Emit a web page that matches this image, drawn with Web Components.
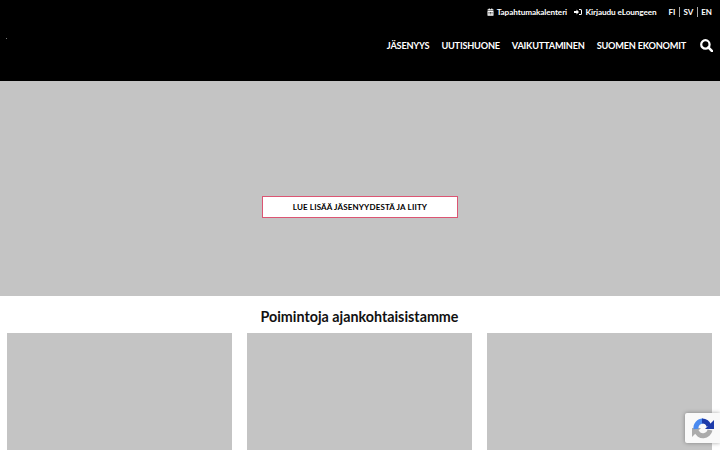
<!DOCTYPE html>
<html lang="fi">
<head>
<meta charset="utf-8">
<title>Ekonomit</title>
<style>
  html, body { margin: 0; height: 450px; overflow: hidden; background: #fff; }
  body { font-family: "Lato", "Liberation Sans", sans-serif; }
</style>
</head>
<body>
<site-header></site-header>
<hero-banner label="LUE LISÄÄ JÄSENYYDESTÄ JA LIITY"></hero-banner>
<news-section heading="Poimintoja ajankohtaisistamme">
  <news-card></news-card>
  <news-card></news-card>
  <news-card></news-card>
</news-section>
<recaptcha-badge></recaptcha-badge>

<script>
class SiteHeader extends HTMLElement {
    constructor() {
        super();
        this.attachShadow({ mode: 'open' });
    }

    connectedCallback() {
        this.shadowRoot.innerHTML = /*html*/`
        <style>
            :host { display: block; height: 81px; background: #000; color: #fff; position: relative; }
            .top { display: flex; justify-content: flex-end; align-items: center; height: 24px; padding-right: 8px; font-size: 8.2px; font-weight: 700; letter-spacing: -.1px; }
            .top a { display: flex; align-items: center; gap: 3px; margin-right: 7px; }
            .top svg { width: 7px; height: 8px; fill: #fff; }
            .top a.login { gap: 3.5px; }
            .top a.login svg { width: 8px; }
            .lang { display: flex; align-items: center; margin-left: 5px; font-size: 8px; letter-spacing: 0; }
            .lang span { padding: 0 3.5px; height: 10px; line-height: 10px; border-left: 1px solid #aaa; }
            .lang span:first-child { border-left: 0; padding-left: 0; }
            .lang span:last-child { padding-right: 0; }
            nav { display: flex; justify-content: flex-end; align-items: center; height: 42px; padding-right: 7px; font-size: 9.2px; font-weight: 700; letter-spacing: -.22px; }
            nav a { margin-right: 12px; }
            nav svg { width: 13px; height: 13px; fill: none; stroke: #fff; margin-left: 2px; }
            .dot { position: absolute; left: 6px; top: 38px; width: 1px; height: 1px; background: #777; }
        </style>
        <div class="dot"></div>
        <div class="top">
            <a><svg viewBox="0 0 14 16"><path fill-rule="evenodd" d="M1 6h12v8.500a1 1 0 0 1-1 1H2a1 1 0 0 1-1-1zM3 8v1.500h2V8zm3 0v1.500h2V8zm3 0v1.500h2V8zm-6 3v1.500h2V11zm3 0v1.500h2V11zm3 0v1.500h2V11zM2 2.500h1.500V1h2v1.500h3V1h2v1.500H12a1 1 0 0 1 1 1V5H1V3.500a1 1 0 0 1 1-1z"/></svg>Tapahtumakalenteri</a>
            <a class="login"><svg viewBox="0 0 16 14"><path d="M0 5h5V2l5 5-5 5V9H0zM10 1h3a3 3 0 0 1 3 3v6a3 3 0 0 1-3 3h-3v-2h3a1 1 0 0 0 1-1V4a1 1 0 0 0-1-1h-3z"/></svg>Kirjaudu eLoungeen</a>
            <div class="lang"><span>FI</span><span>SV</span><span>EN</span></div>
        </div>
        <nav>
            <a>JÄSENYYS</a>
            <a>UUTISHUONE</a>
            <a>VAIKUTTAMINEN</a>
            <a>SUOMEN EKONOMIT</a>
            <svg viewBox="0 0 14 14"><circle cx="5.800" cy="5.800" r="4.500" stroke-width="2.400"/><path d="M9 9l4 4" stroke-width="2.800" stroke-linecap="round"/></svg>
        </nav>
        `;
    }
}
customElements.define('site-header', SiteHeader);

class HeroBanner extends HTMLElement {
    constructor() {
        super();
        this.attachShadow({ mode: 'open' });
    }

    connectedCallback() {
        const label = this.getAttribute('label');
        this.shadowRoot.innerHTML = /*html*/`
        <style>
            :host { display: flex; justify-content: center; align-items: flex-start; height: 215px; background: #c4c4c4; }
            a { display: flex; justify-content: center; align-items: center; box-sizing: border-box; width: 196px; height: 22px; margin-top: 115px; background: #fff; border: 1px solid #dc5573; color: #000; font-size: 8px; font-weight: 700; letter-spacing: .14px; }
        </style>
        <a>${label}</a>
        `;
    }
}
customElements.define('hero-banner', HeroBanner);

class NewsSection extends HTMLElement {
    constructor() {
        super();
        this.attachShadow({ mode: 'open' });
    }

    connectedCallback() {
        const heading = this.getAttribute('heading');
        this.shadowRoot.innerHTML = /*html*/`
        <style>
            :host { display: block; background: #fff; padding: 0 8px 0 7px; }
            h2 { margin: 0; height: 37px; line-height: 42px; text-align: center; font-size: 14.3px; font-weight: 700; color: #111; }
            .cards { display: grid; grid-template-columns: repeat(3, 225px); gap: 15px; }
        </style>
        <h2>${heading}</h2>
        <div class="cards"><slot></slot></div>
        `;
    }
}
customElements.define('news-section', NewsSection);

class NewsCard extends HTMLElement {
    constructor() {
        super();
        this.attachShadow({ mode: 'open' });
        this.shadowRoot.innerHTML = /*html*/`
        <style>
            :host { display: block; height: 117px; background: #c4c4c4; }
        </style>
        `;
    }
}
customElements.define('news-card', NewsCard);

class RecaptchaBadge extends HTMLElement {
    constructor() {
        super();
        this.attachShadow({ mode: 'open' });
        this.shadowRoot.innerHTML = /*html*/`
        <style>
            :host { position: absolute; left: 685px; top: 413px; width: 35px; height: 30px; background: #f9f9f9; box-shadow: 0 0 4px rgba(0,0,0,.35); border-radius: 2px 0 0 2px; display: flex; align-items: center; justify-content: center; }
            svg { width: 22px; height: 23px; margin-left: 1px; }
        </style>
        <svg viewBox="0 0 22 23" fill="none">
            <path d="M18 13A7 7 0 0 1 4.500 14" stroke="#ababab" stroke-width="5"/>
            <path d="M0 11h9l-9 9z" fill="#ababab"/>
            <path d="M4 12A7 7 0 0 1 11 4" stroke="#4a8af0" stroke-width="5"/>
            <path d="M10 4A7 7 0 0 1 17 9" stroke="#1c3aa9" stroke-width="5"/>
            <path d="M22 3v9h-9z" fill="#1c3aa9"/>
        </svg>
        `;
    }
}
customElements.define('recaptcha-badge', RecaptchaBadge);
</script>
</body>
</html>
